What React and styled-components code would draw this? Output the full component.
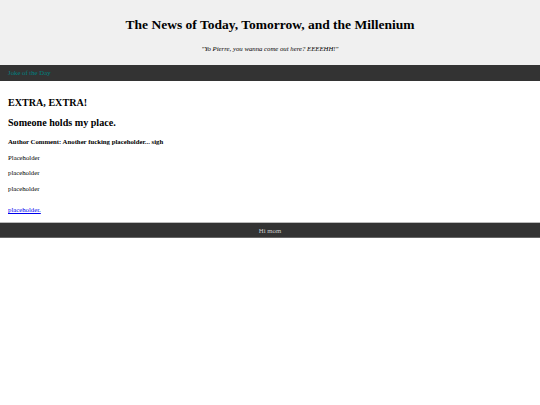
import React from 'react';
import styled, { createGlobalStyle } from 'styled-components';

const GlobalStyle = createGlobalStyle`
  html, body {
    margin: 0;
    padding: 0;
    background: #fff;
    font-family: "Liberation Serif", "Times New Roman", serif;
    color: #000;
  }
`;

const Header = styled.header`
  background: #f0f0f0;
  height: 65px;
  box-sizing: border-box;
  padding-top: 17px;
  text-align: center;
`;

const Title = styled.h1`
  margin: 0;
  font-size: 13.5px;
  line-height: 16px;
  font-weight: bold;
`;

const Tagline = styled.p`
  margin: 12px 0 0;
  font-size: 6.75px;
  line-height: 8px;
  font-style: italic;
`;

const Nav = styled.nav`
  background: #333;
  height: 16px;
  display: flex;
  align-items: center;
  padding: 0 8px;
`;

const NavLink = styled.a`
  color: teal;
  text-decoration: none;
  font-size: 6.75px;
  line-height: 8px;
`;

const Main = styled.main`
  padding: 16px 8px 8px;
`;

const Heading = styled.h2`
  margin: ${p => p.$gap || 0}px 0 0;
  font-size: 10.1px;
  line-height: 12px;
  font-weight: bold;
`;

const Comment = styled.h4`
  margin: 9px 0 0;
  font-size: 6.75px;
  line-height: 8px;
  font-weight: bold;
`;

const Para = styled.p`
  margin: ${p => p.$gap || 7}px 0 0;
  font-size: 6.75px;
  line-height: 8px;
`;

const Link = styled.a`
  color: #0000ee;
  text-decoration: underline;
`;

const Footer = styled.footer`
  background: #333;
  color: #ccc;
  height: 16px;
  box-sizing: border-box;
  border-top: 1px solid #bbb;
  border-bottom: 1px solid #666;
  display: flex;
  align-items: center;
  justify-content: center;
  font-size: 6.75px;
`;

export default function App() {
  return (
    <>
      <GlobalStyle />
      <Header>
        <Title>The News of Today, Tomorrow, and the Millenium</Title>
        <Tagline>"Yo Pierre, you wanna come out here? EEEEHH!"</Tagline>
      </Header>
      <Nav>
        <NavLink href="#">Joke of the Day</NavLink>
      </Nav>
      <Main>
        <Heading>EXTRA, EXTRA!</Heading>
        <Heading $gap={8}>Someone holds my place.</Heading>
        <Comment>Author Comment: Another fucking placeholder... sigh</Comment>
        <Para $gap={8}>Placeholder</Para>
        <Para>placeholder</Para>
        <Para $gap={8}>placeholder</Para>
        <Para $gap={13}>
          <Link href="#">placeholder.</Link>
        </Para>
      </Main>
      <Footer>Hi mom</Footer>
    </>
  );
}
